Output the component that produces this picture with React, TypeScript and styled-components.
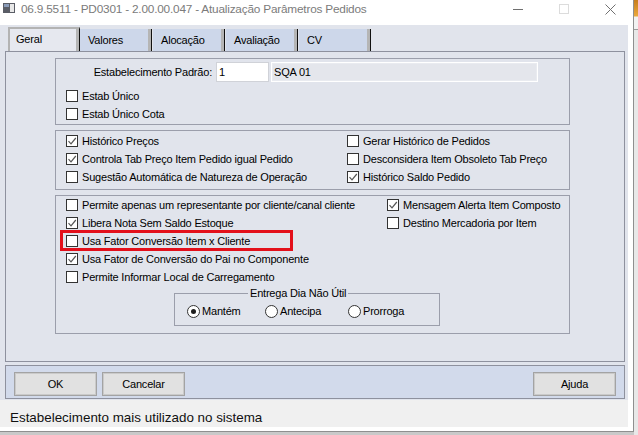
import styled, { createGlobalStyle } from "styled-components";

const GlobalStyle = createGlobalStyle`
  html, body { margin: 0; padding: 0; }
  body {
    font-family: "Liberation Sans", Arial, sans-serif;
    font-size: 11px;
    letter-spacing: -0.2px;
    color: #000;
    background: #c9c9c9;
  }
`;

const Screen = styled.div`
  width: 638px;
  height: 435px;
  display: flex;
  overflow: hidden;
  background: #c9c9c9;
`;

const Desktop = styled.div`
  flex: 1;
  background: linear-gradient(
    to bottom,
    #c77d1c 0,
    #eaa83c 16px,
    #f2f2f2 17px,
    #f2f2f2 29px,
    #9c9c9c 29px,
    #9c9c9c 30px,
    #e8e8e8 30px
  );
`;

const Window = styled.div`
  width: 634px;
  height: 432px;
  flex: none;
  box-sizing: border-box;
  background: #fff;
  border-right: 1px solid #8f8f8f;
  border-bottom: 1px solid #8f8f8f;
  display: flex;
  flex-direction: column;
`;

const TitleBar = styled.div`
  height: 25px;
  flex: none;
  display: flex;
  align-items: flex-start;
  padding-left: 3px;
`;

const TitleText = styled.div`
  font-size: 11.8px;
  letter-spacing: -0.2px;
  line-height: 14px;
  color: #7b7b7b;
  margin: 2px 0 0 6px;
  white-space: nowrap;
`;

const TitleIcon = styled.svg`
  margin-top: 3px;
  flex: none;
`;

const Controls = styled.div`
  margin-left: auto;
  display: flex;
`;

const ControlSlot = styled.div`
  width: 46px;
  height: 18px;
  display: flex;
  align-items: center;
  justify-content: center;
`;

const Client = styled.div`
  margin-right: 5px;
  height: 375px;
  flex: none;
  box-sizing: border-box;
  background: #e1e4ec;
  padding: 2px 3px 0 5px;
`;

const TabStrip = styled.div`
  height: 24px;
  display: flex;
  align-items: flex-end;
  padding-left: 3px;
`;

const Tab = styled.div<{ $active?: boolean }>`
  width: 72px;
  height: ${(p) => (p.$active ? 24 : 22)}px;
  box-sizing: border-box;
  margin-right: ${(p) => (p.$active ? 0 : 1)}px;
  background: ${(p) => (p.$active ? "#e6e8ef" : "#cdd7ea")};
  border-right: 1px solid #111;
  border-left: ${(p) => (p.$active ? "2px solid #b3b3b3" : "none")};
  border-top: ${(p) => (p.$active ? "2px solid #b3b3b3" : "none")};
  box-shadow: inset -3px 0 0 #b5b5b5;
  padding-left: ${(p) => (p.$active ? 6 : 8)}px;
  line-height: ${(p) => (p.$active ? 20 : 22)}px;
  white-space: nowrap;
`;

const Panel = styled.div`
  width: 620px;
  height: 311px;
  box-sizing: border-box;
  border: 1px solid #8e919e;
  padding: 6px 0 0 49px;
`;

const Group = styled.div<{ $h: number; $gap?: number; $top?: number }>`
  width: 515px;
  height: ${(p) => p.$h}px;
  box-sizing: border-box;
  border: 1px solid #9b9eab;
  margin-bottom: ${(p) => p.$gap ?? 0}px;
  padding: ${(p) => p.$top ?? 0}px 0 0 10px;
`;

const FieldRow = styled.div`
  display: flex;
  align-items: center;
  height: 20px;
  margin-bottom: 5px;
`;

const FieldLabel = styled.div`
  width: 146px;
  text-align: right;
  white-space: nowrap;
`;

const TextInput = styled.div<{ $disabled?: boolean }>`
  height: 20px;
  box-sizing: border-box;
  width: ${(p) => (p.$disabled ? 267 : 53)}px;
  margin-left: ${(p) => (p.$disabled ? 2 : 4)}px;
  background: ${(p) => (p.$disabled ? "#e4e6ec" : "#fff")};
  border: 1px solid ${(p) => (p.$disabled ? "#fff" : "#d0d2d8")};
  box-shadow: ${(p) => (p.$disabled ? "inset 0 0 0 1px #e9ebf0" : "none")};
  padding-left: 2px;
  line-height: 18px;
`;

const Grid = styled.div<{ $col: number }>`
  display: grid;
  grid-template-columns: ${(p) => p.$col}px auto;
  grid-auto-rows: 18px;
`;

const Check = styled.label`
  position: relative;
  display: flex;
  align-items: center;
  white-space: nowrap;
`;

const Box = styled.span`
  width: 12px;
  height: 12px;
  box-sizing: border-box;
  border: 1px solid #333;
  background: #fff;
  margin-right: 4px;
  flex: none;
  display: flex;
  align-items: center;
  justify-content: center;
`;

const Highlight = styled.span`
  position: absolute;
  left: -6px;
  top: -2px;
  width: 233px;
  height: 21px;
  box-sizing: border-box;
  border: 3px solid #e3101b;
  pointer-events: none;
`;

const Fieldset = styled.fieldset`
  margin: 1px 0 0 108px;
  padding: 3px 0 0 12px;
  width: 266px;
  height: 39px;
  box-sizing: border-box;
  border: 1px solid #9b9eab;
  display: flex;
`;

const Legend = styled.legend`
  margin-left: 61px;
  padding: 0 2px;
  line-height: 13px;
`;

const RadioItem = styled.label<{ $w: number }>`
  width: ${(p) => p.$w}px;
  display: flex;
  align-items: center;
  height: 16px;
`;

const Circle = styled.span`
  width: 13px;
  height: 13px;
  box-sizing: border-box;
  border: 1px solid #333;
  border-radius: 50%;
  background: #fff;
  margin-right: 2px;
  display: flex;
  align-items: center;
  justify-content: center;
`;

const Dot = styled.span`
  width: 5px;
  height: 5px;
  border-radius: 50%;
  background: #1e1e1e;
`;

const ButtonBar = styled.div`
  margin-top: 3px;
  width: 620px;
  height: 34px;
  box-sizing: border-box;
  background: #d2daeb;
  border: 1px solid #8e919e;
  display: flex;
  align-items: flex-start;
  padding: 6px 8px 0 8px;
`;

const Button = styled.div<{ $gap?: string }>`
  width: 83px;
  height: 24px;
  box-sizing: border-box;
  background: #e1e1e1;
  border: 1px solid #a3a3a3;
  box-shadow: inset 0 0 0 1px #cacaca;
  text-align: center;
  line-height: 22px;
  margin-left: ${(p) => p.$gap ?? "0"};
`;

const StatusBar = styled.div`
  margin-right: 5px;
  height: 27px;
  flex: none;
  box-sizing: border-box;
  background: #f0f0f0;
  padding: 10px 0 0 10px;
  font-size: 13.4px;
  letter-spacing: 0;
  line-height: 16px;
  color: #111;
`;

function CheckMark() {
  return (
    <svg width="10" height="10" viewBox="0 0 10 10">
      <path d="M1.5 5.2 L4 7.8 L8.8 2" fill="none" stroke="#555" strokeWidth="1.2" />
    </svg>
  );
}

function CheckBox({ label, checked, marked }: { label: string; checked?: boolean; marked?: boolean }) {
  return (
    <Check>
      <Box>{checked && <CheckMark />}</Box>
      {label}
      {marked && <Highlight />}
    </Check>
  );
}

const group2 = [
  { label: "Histórico Preços", checked: true },
  { label: "Gerar Histórico de Pedidos" },
  { label: "Controla Tab Preço Item Pedido igual Pedido", checked: true },
  { label: "Desconsidera Item Obsoleto Tab Preço" },
  { label: "Sugestão Automática de Natureza de Operação" },
  { label: "Histórico Saldo Pedido", checked: true },
];

const group3 = [
  { label: "Permite apenas um representante por cliente/canal cliente" },
  { label: "Mensagem Alerta Item Composto", checked: true },
  { label: "Libera Nota Sem Saldo Estoque", checked: true },
  { label: "Destino Mercadoria por Item" },
  { label: "Usa Fator Conversão Item x Cliente", marked: true },
  null,
  { label: "Usa Fator de Conversão do Pai no Componente", checked: true },
  null,
  { label: "Permite Informar Local de Carregamento" },
  null,
];

const tabs = ["Geral", "Valores", "Alocação", "Avaliação", "CV"];

export default function App() {
  return (
    <Screen>
      <GlobalStyle />
      <Window>
        <TitleBar>
          <TitleIcon width="12" height="10" viewBox="0 0 12 10">
            <rect x="0" y="0" width="12" height="10" fill="#5a5d66" />
            <rect x="7" y="1" width="4" height="8" fill="#e8e8e8" />
            <rect x="1" y="1" width="5" height="3" fill="#8a9bb8" />
          </TitleIcon>
          <TitleText>06.9.5511 - PD0301 - 2.00.00.047 - Atualização Parâmetros Pedidos</TitleText>
          <Controls>
            <ControlSlot>
              <svg width="10" height="10" viewBox="0 0 10 10">
                <path d="M0 5.5 H10" stroke="#6f6f6f" strokeWidth="1" />
              </svg>
            </ControlSlot>
            <ControlSlot>
              <svg width="10" height="10" viewBox="0 0 10 10">
                <rect x="0.5" y="0.5" width="9" height="9" fill="none" stroke="#dcdcdc" />
              </svg>
            </ControlSlot>
            <ControlSlot>
              <svg width="11" height="11" viewBox="0 0 11 11">
                <path d="M0.5 0.5 L10.5 10.5 M10.5 0.5 L0.5 10.5" stroke="#707070" strokeWidth="1" />
              </svg>
            </ControlSlot>
          </Controls>
        </TitleBar>

        <Client>
          <TabStrip>
            {tabs.map((t, i) => (
              <Tab key={t} $active={i === 0}>
                {t}
              </Tab>
            ))}
          </TabStrip>

          <Panel>
            <Group $h={67} $gap={5} $top={3}>
              <FieldRow>
                <FieldLabel>Estabelecimento Padrão:</FieldLabel>
                <TextInput>1</TextInput>
                <TextInput $disabled>SQA 01</TextInput>
              </FieldRow>
              <Grid $col={200}>
                <CheckBox label="Estab Único" />
                <span />
                <CheckBox label="Estab Único Cota" />
              </Grid>
            </Group>

            <Group $h={60} $gap={5} $top={1}>
              <Grid $col={281}>
                {group2.map((c) => (
                  <CheckBox key={c.label} label={c.label} checked={c.checked} />
                ))}
              </Grid>
            </Group>

            <Group $h={139} $top={0}>
              <Grid $col={321}>
                {group3.map((c, i) =>
                  c ? (
                    <CheckBox key={c.label} label={c.label} checked={c.checked} marked={c.marked} />
                  ) : (
                    <span key={i} />
                  )
                )}
              </Grid>
              <Fieldset>
                <Legend>Entrega Dia Não Útil</Legend>
                <RadioItem $w={78}>
                  <Circle>
                    <Dot />
                  </Circle>
                  Mantém
                </RadioItem>
                <RadioItem $w={83}>
                  <Circle />
                  Antecipa
                </RadioItem>
                <RadioItem $w={80}>
                  <Circle />
                  Prorroga
                </RadioItem>
              </Fieldset>
            </Group>
          </Panel>

          <ButtonBar>
            <Button>OK</Button>
            <Button $gap="5px">Cancelar</Button>
            <Button $gap="auto">Ajuda</Button>
          </ButtonBar>
        </Client>

        <StatusBar>Estabelecimento mais utilizado no sistema</StatusBar>
      </Window>
      <Desktop />
    </Screen>
  );
}
